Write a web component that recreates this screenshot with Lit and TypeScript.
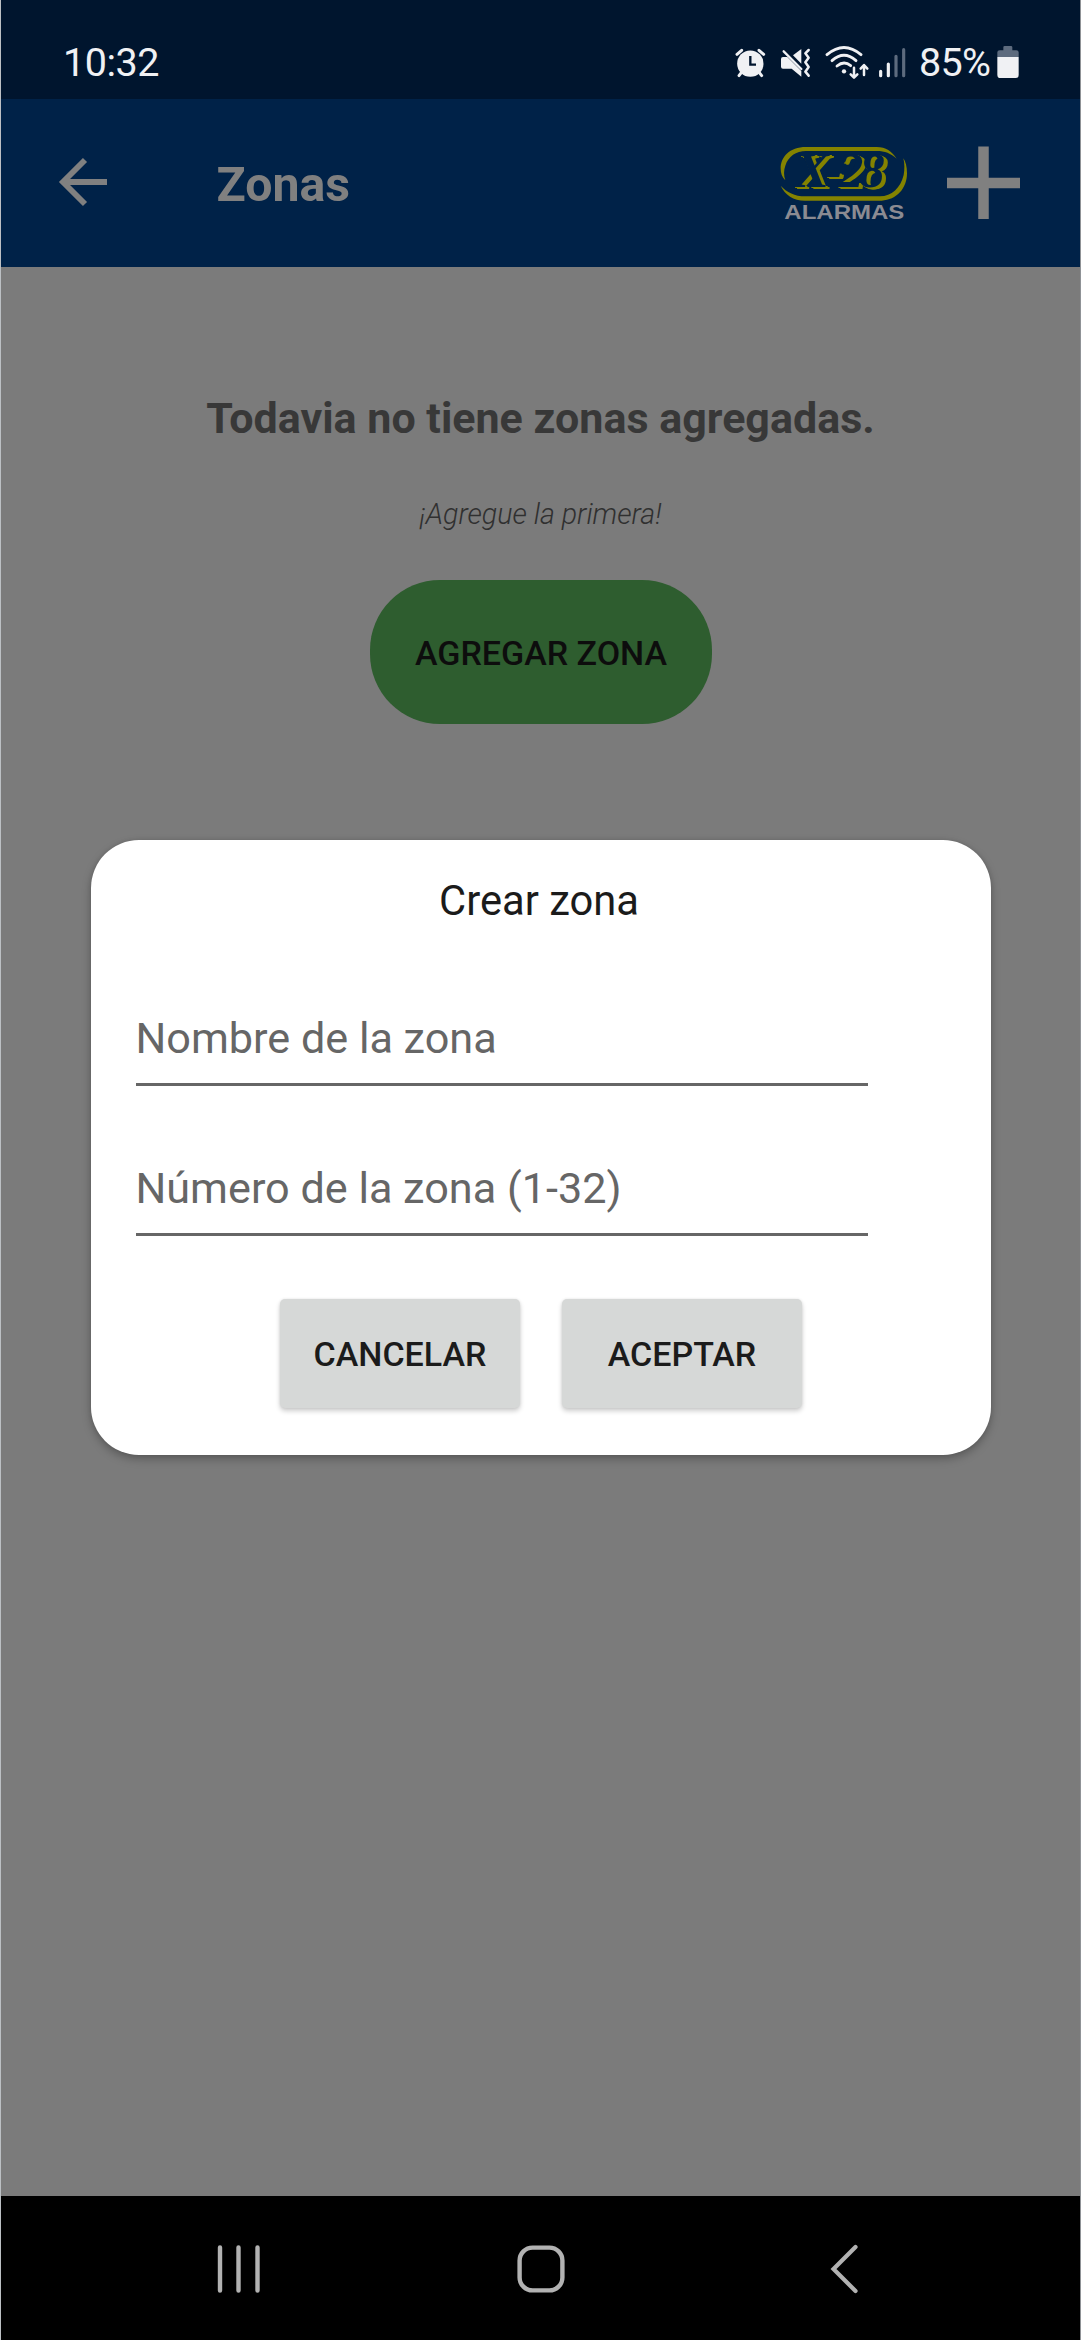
import { LitElement, html, css } from "lit";
import { customElement, property } from "lit/decorators.js";

@customElement("status-bar")
class StatusBar extends LitElement {
  static styles = css`
    :host {
      display: flex;
      align-items: flex-start;
      height: 99px;
      box-sizing: border-box;
      padding: 0 61px 0 62px;
      background: #00152e;
      color: #f0f1f4;
      font: 400 39.5px/48px Roboto, sans-serif;
    }
    .clock {
      flex: 1;
      padding-top: 39px;
      letter-spacing: -0.5px;
    }
    .pct {
      padding-top: 39px;
      width: 71px;
      margin: 0 7px 0 13px;
      white-space: nowrap;
      letter-spacing: -0.7px;
    }
    svg {
      display: block;
      margin-top: 45px;
      flex: none;
    }
    .mute { margin-left: 14px; }
    .wifi { margin-left: 13px; }
    .signal { margin-left: 8px; }
  `;
  render() {
    const c = "#f0f1f4";
    return html`
      <div class="clock">10:32</div>
      <svg width="31" height="35" viewBox="105 75 93 105">
        <circle cx="151" cy="131" r="39.5" fill=${c} />
        <g stroke=${c} stroke-width="9" stroke-linecap="round" fill="none">
          <path d="M111 103L125 91M177 91L191 103" />
          <path d="M124 158L117 167M178 158L185 167" />
        </g>
        <path d="M151 108V134H168" fill="none" stroke="#00152e" stroke-width="7" />
      </svg>
      <svg class="mute" width="32" height="35" viewBox="240 75 96 105">
        <path d="M249 111H262L304 153V170L275 146H249Q243 146 243 140V117Q243 111 249 111Z" fill=${c} />
        <path d="M304 87V131L279 106Z" fill=${c} />
        <path d="M251 94L304 147" stroke=${c} stroke-width="7" stroke-linecap="round" />
        <path d="M326 90L316 100L326 113L316 127L326 141L316 155L326 167" fill="none" stroke=${c} stroke-width="7.5" stroke-linecap="round" stroke-linejoin="round" />
      </svg>
      <svg class="wifi" width="45" height="35" viewBox="372 75 135 105">
        <g fill="none" stroke=${c} stroke-width="8.5" stroke-linecap="round">
          <path d="M378 104Q429 61 480 104" />
          <path d="M393 122Q429 90 465 122" />
          <path d="M408 138Q429 121 449 137" />
        </g>
        <circle cx="429" cy="154" r="6.5" fill=${c} />
        <g fill="none" stroke=${c} stroke-width="7.5" stroke-linecap="round" stroke-linejoin="round">
          <path d="M459 143V172M449 163L459 173L469 163" />
          <path d="M489 165V136M479 146L489 135L499 146" />
        </g>
      </svg>
      <svg class="signal" width="28" height="35" viewBox="531 75 84 105">
        <g stroke-width="9.5" stroke-linecap="round">
          <path d="M539 154V167M562 132V167" stroke=${c} />
          <path d="M585 109V167M608 89V167" stroke="#5d6b7e" />
        </g>
      </svg>
      <div class="pct">85%</div>
      <svg width="22" height="35" viewBox="892 75 66 105">
        <path d="M893 111V97Q893 91 900 91H911V82Q911 78 915 78H934Q938 78 938 82V91H950Q957 91 957 97V111Z" fill="#5d6b7e" />
        <path d="M893 111H957V164Q957 174 948 174H902Q893 174 893 164Z" fill=${c} />
      </svg>
    `;
  }
}

@customElement("brand-logo")
class BrandLogo extends LitElement {
  static styles = css`
    :host { display: block; }
    svg { display: block; overflow: visible; }
    .mark {
      font: italic 700 152px "Liberation Serif", serif;
      letter-spacing: -12px;
      fill: #002248;
      text-shadow: 1px 0.5px #848300, 2px 1px #848300, 3px 1.5px #848300,
        4px 2px #848300;
    }
    .name { font: 700 58px "Liberation Sans", sans-serif; }
  `;
  render() {
    return html`
      <svg width="128" height="80" viewBox="60 78 384 240">
        <g fill="#848300">
          <path d="M410 116C395 94 378 81 350 81H138C88 81 62 112 62 145C62 160 66 172 76 181C71 167 71 151 76 137C85 109 108 93 138 93H350C375 93 392 100 410 116Z" />
          <path d="M62 197C75 225 100 242 135 242H365C410 240 441 205 441 160C441 140 437 125 430 115C434 131 434 148 431 165C422 203 395 229 360 229H135C105 229 80 217 62 197Z" />
        </g>
        <text class="mark" x="106" y="201">X-28</text>
        <text class="name" fill="#8b8b92" x="73" y="297" textLength="360" lengthAdjust="spacingAndGlyphs">ALARMAS</text>
      </svg>
    `;
  }
}

@customElement("app-header")
class AppHeader extends LitElement {
  static styles = css`
    :host {
      display: flex;
      align-items: flex-start;
      height: 168px;
      box-sizing: border-box;
      padding: 0 60px 0 57px;
      background: #002248;
      color: #808080;
    }
    svg { display: block; flex: none; }
    .back { margin-top: 58px; }
    .title {
      flex: 1;
      margin: 0 0 0 108.5px;
      padding-top: 56px;
      font: 700 48.2px/60px Roboto, sans-serif;
    }
    .logo { margin-top: 47px; }
    .add { margin: 47px 0 0 39px; }
  `;
  render() {
    return html`
      <svg class="back" width="50" height="50" viewBox="0 0 50 50">
        <path d="M49 25H5M27 3L5 25L27 47" fill="none" stroke="#808080" stroke-width="5.8" />
      </svg>
      <h1 class="title">Zonas</h1>
      <brand-logo class="logo"></brand-logo>
      <svg class="add" width="73" height="73" viewBox="0 0 73 73">
        <path d="M0 37H73M36.5 0.5V73" stroke="#808080" stroke-width="10.5" />
      </svg>
    `;
  }
}

@customElement("zone-field")
class ZoneField extends LitElement {
  @property() hint = "";
  static styles = css`
    :host {
      display: block;
      width: 732px;
      height: 72px;
      box-sizing: border-box;
      border-bottom: 3px solid #666;
      color: #666;
      font: 400 43.2px/49px Roboto, sans-serif;
      white-space: nowrap;
    }
  `;
  render() {
    return html`<span>${this.hint}</span>`;
  }
}

@customElement("zone-dialog")
class ZoneDialog extends LitElement {
  static styles = css`
    :host {
      display: block;
      width: 900px;
      height: 615px;
      box-sizing: border-box;
      padding: 0 45px;
      border-radius: 48px;
      background: #fff;
      box-shadow: 0 4px 10px rgba(0, 0, 0, 0.26), 0 0 4px rgba(0, 0, 0, 0.1);
      font-family: Roboto, sans-serif;
    }
    .title {
      margin: 0 3px 0 0;
      padding-top: 36px;
      height: 174px;
      box-sizing: border-box;
      font: 400 41.7px/50px Roboto, sans-serif;
      color: #1b1b1b;
      text-align: center;
    }
    .fields {
      display: grid;
      gap: 78px;
    }
    .actions {
      display: flex;
      justify-content: center;
      gap: 42px;
      padding-top: 63px;
    }
    .btn {
      width: 240px;
      height: 109px;
      padding: 0 0 0 1px;
      border: 0;
      border-radius: 5px;
      background: #d6d8d7;
      color: #1b1b1b;
      font: 500 34px/110px Roboto, sans-serif;
      box-shadow: 0 3px 5px rgba(0, 0, 0, 0.2), 0 0 3px rgba(0, 0, 0, 0.08);
    }
  `;
  render() {
    return html`
      <h2 class="title">Crear zona</h2>
      <div class="fields">
        <zone-field hint="Nombre de la zona"></zone-field>
        <zone-field hint="Número de la zona (1-32)"></zone-field>
      </div>
      <div class="actions">
        <button class="btn">CANCELAR</button>
        <button class="btn">ACEPTAR</button>
      </div>
    `;
  }
}

@customElement("nav-bar")
class NavBar extends LitElement {
  static styles = css`
    :host {
      display: grid;
      grid-template-columns: 45px 1fr 31px;
      align-items: center;
      justify-items: center;
      height: 144px;
      box-sizing: border-box;
      padding: 2px 220px 0 215px;
      background: #000;
    }
    svg { display: block; }
    .home { margin-right: 9px; }
  `;
  render() {
    return html`
      <svg width="45" height="50" viewBox="0 0 45 50">
        <path d="M4 3.5V46.5M22.5 3.5V46.5M41.5 3.5V46.5" stroke="#b2b2b2" stroke-width="4.4" stroke-linecap="round" />
      </svg>
      <svg class="home" width="50" height="50" viewBox="0 0 50 50">
        <rect x="3.6" y="3.6" width="42.8" height="42.8" rx="13" fill="none" stroke="#b2b2b2" stroke-width="4.4" />
      </svg>
      <svg width="31" height="50" viewBox="0 0 31 50">
        <path d="M26.5 3L4.5 25L26.5 47" fill="none" stroke="#b2b2b2" stroke-width="4.2" stroke-linecap="round" />
      </svg>
    `;
  }
}

@customElement("app-root")
class AppRoot extends LitElement {
  static styles = css`
    :host {
      display: flex;
      flex-direction: column;
      position: relative;
      width: 1081px;
      height: 2340px;
      box-sizing: border-box;
      border-left: 1px solid #bcc0c4;
      border-right: 1px solid #8f9296;
      background: #7b7b7b;
      font-family: Roboto, sans-serif;
      overflow: hidden;
    }
    .body {
      flex: 1;
      display: flex;
      flex-direction: column;
      align-items: center;
      color: #383838;
    }
    .headline {
      margin: 0;
      padding-top: 121px;
      font: 700 43px/60px Roboto, sans-serif;
      white-space: nowrap;
    }
    .hint {
      margin: 0;
      padding-top: 46px;
      font: italic 300 28.6px/40px Roboto, sans-serif;
      color: #303030;
      white-space: nowrap;
    }
    .add {
      margin-top: 46px;
      width: 342px;
      height: 144px;
      padding: 0 0 0 1px;
      border: 0;
      border-radius: 70px;
      background: #2e5d2f;
      color: #0d0d0d;
      font: 500 34px/146px Roboto, sans-serif;
      white-space: nowrap;
    }
    .overlay {
      position: absolute;
      inset: 99px 0 144px 0;
      display: flex;
      align-items: center;
      justify-content: center;
    }
  `;
  render() {
    return html`
      <status-bar></status-bar>
      <app-header></app-header>
      <main class="body">
        <p class="headline">Todavia no tiene zonas agregadas.</p>
        <p class="hint">¡Agregue la primera!</p>
        <button class="add">AGREGAR ZONA</button>
      </main>
      <nav-bar></nav-bar>
      <div class="overlay"><zone-dialog></zone-dialog></div>
    `;
  }
}
